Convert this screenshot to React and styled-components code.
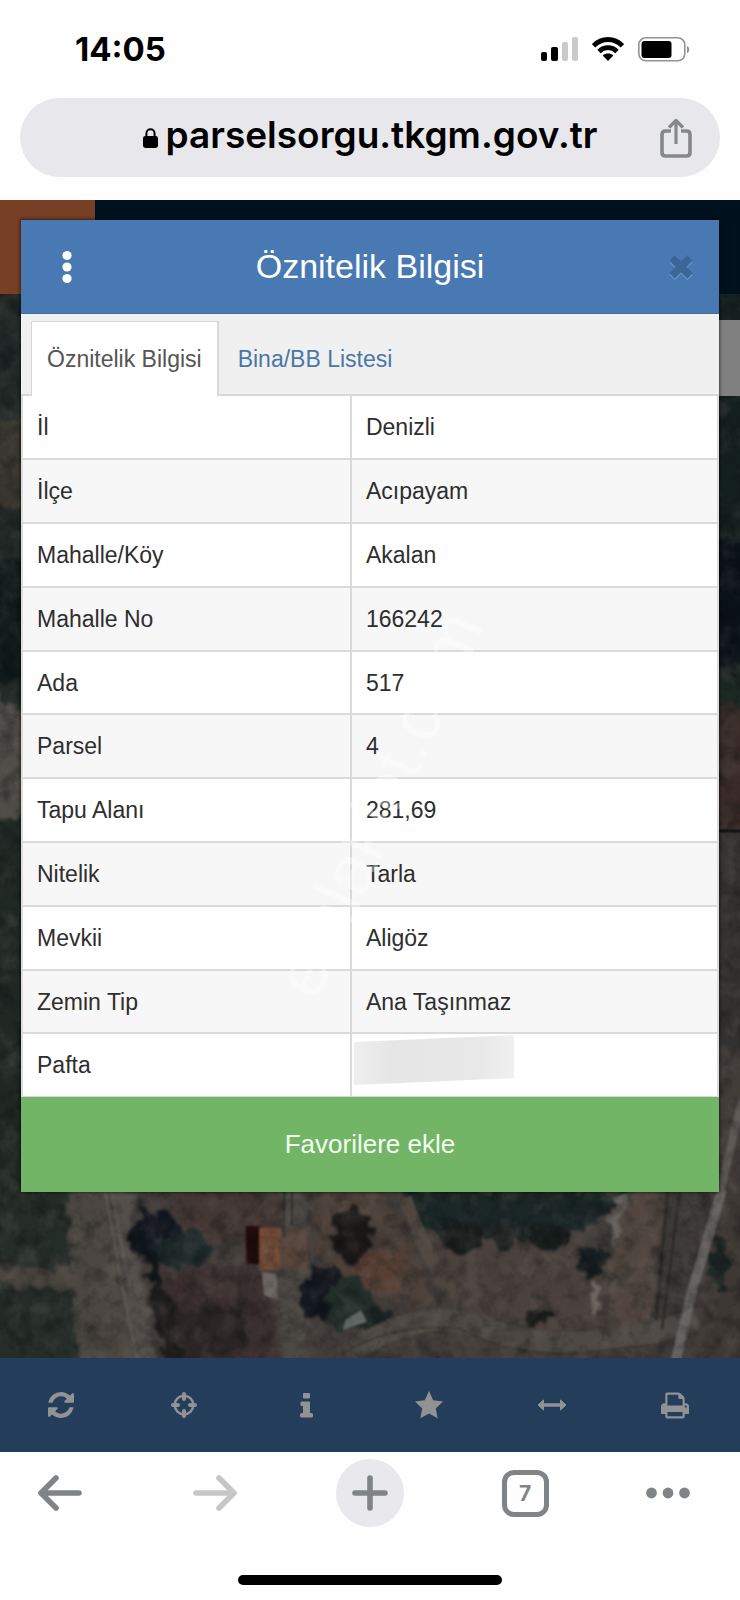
import React from "react";
import styled, { createGlobalStyle, css } from "styled-components";

const GlobalStyle = createGlobalStyle`
  *, *::before, *::after { box-sizing: border-box; }
  body {
    margin: 0;
    background: #fefefe;
    font-family: "Liberation Sans", Arial, sans-serif;
    color: #333;
  }
  svg { display: block; }
`;

const Screen = styled.div`
  display: flex;
  flex-direction: column;
  min-height: 100vh;
`;

/* ---------- phone status and address bar ---------- */

const StatusBar = styled.header`
  display: flex;
  align-items: center;
  justify-content: space-between;
  height: 98px;
  padding: 0 50px 0 75px;
`;

const Clock = styled.time`
  font: 700 33px/40px Inter, sans-serif;
  color: #000;
`;

const StatusIcons = styled.div`
  display: flex;
  align-items: center;
  gap: 14px;
`;

const AddressBar = styled.div`
  display: grid;
  grid-template-columns: 64px 1fr 64px;
  align-items: center;
  height: 79px;
  margin: 0 20px 23px;
  padding: 0 12px;
  border-radius: 40px;
  background: #e8e8ec;
`;

const Address = styled.div`
  grid-column: 2;
  display: flex;
  align-items: flex-end;
  justify-content: center;
  gap: 8px;
  padding-bottom: 6px;
  font: 600 37px/46px Inter, sans-serif;
  color: #000;

  svg { margin-bottom: 10px; }
`;

const PlainButton = styled.button`
  display: flex;
  align-items: center;
  justify-content: center;
  padding: 0;
  border: 0;
  background: none;
  color: inherit;
  font: inherit;
  cursor: pointer;
`;

/* ---------- web page ---------- */

const WebView = styled.main`
  display: grid;
  grid-template-columns: minmax(0, 1fr);
`;

const Site = styled.div`
  grid-area: 1 / 1;
  display: flex;
  flex-direction: column;
`;

const SiteHeader = styled.div`
  display: flex;
  height: 94px;
  background: #00111e;
`;

const MenuBlock = styled.div`
  width: 95px;
  background: #773f24;
`;

const MapArea = styled.div`
  position: relative;
  flex: 1;
  overflow: hidden;
  background: #343230;
`;

const MapImage = styled.svg`
  position: absolute;
  inset: 0;
  width: 100%;
  height: 100%;
`;

const SidePanel = styled.div`
  position: absolute;
  top: 26px;
  right: 0;
  width: 60px;
  height: 76px;
  background: #808080;
`;

const Toolbar = styled.nav`
  display: grid;
  grid-template-columns: repeat(6, 1fr);
  height: 94px;
  padding-right: 4px;
  background: #243d5a;
  color: #919294;
`;

/* ---------- attribute dialog ---------- */

const Dialog = styled.section`
  grid-area: 1 / 1;
  position: relative;
  align-self: start;
  margin: 20px 21px 260px;
  background: #fff;
  box-shadow: 0 0 3px 1px rgba(0, 0, 0, 0.5);
`;

const DialogHeader = styled.header`
  display: grid;
  grid-template-columns: 92px 1fr 76px;
  align-items: stretch;
  height: 94px;
  background: #4879b2;
  border-bottom: 1px solid #416d9f;
  color: #fff;
`;

const DialogTitle = styled.h1`
  margin: 0;
  padding-right: 16px;
  font-size: 34px;
  font-weight: 400;
  line-height: 93px;
  text-align: center;
  white-space: nowrap;
`;

const TabStrip = styled.div`
  display: flex;
  align-items: flex-end;
  height: 82px;
  padding-left: 10px;
  background: #f0f0f0;
  box-shadow: inset 0 -2px #d8d8d8;
`;

const Tab = styled.button`
  height: 75px;
  margin-right: 3px;
  padding: 0 15px;
  border: 1px solid transparent;
  border-bottom: 0;
  background: transparent;
  color: #4a77a5;
  font: 23px/72px "Liberation Sans", Arial, sans-serif;
  white-space: nowrap;
  cursor: pointer;

  ${(p) =>
    p.$active &&
    css`
      background: #fff;
      border-color: #d8d8d8;
      border-right-width: 2px;
      color: #555;
    `}
`;

const AttributeTable = styled.table`
  width: 100%;
  border-collapse: separate;
  border-spacing: 0;
  border: solid #dcdcdc;
  border-width: 0 2px;
  table-layout: fixed;
  font-size: 23px;
`;

const LabelColumn = styled.col`
  width: 47.4%;
`;

const Row = styled.tr`
  height: 64px;
  &:nth-child(even) { background: #f7f7f7; }
  &:nth-child(5n), &:last-child { height: 63px; }
`;

const cell = css`
  padding: 0 14px;
  border-bottom: 2px solid #dadada;
  line-height: 30px;
  text-align: left;
  font-weight: 400;
  color: #2e2e2e;
  ${Row}:last-child & { border-bottom-width: 1px; }
`;

const Label = styled.th`
  ${cell}
  border-right: 2px solid #dadada;
`;

const Value = styled.td`
  ${cell}
`;

const Hidden = styled.div`
  width: 160px;
  height: 50px;
  margin: 0 0 10px -12px;
  background: linear-gradient(90deg, #efefef, #e6e6e6 22%, #e8e8e8 78%, #f0f0f0);
  clip-path: polygon(0 14%, 100% 0, 100% 86%, 0 100%);
`;

const FavoriteButton = styled.button`
  display: block;
  width: 100%;
  height: 95px;
  padding: 0;
  border: 0;
  background: #72b566;
  color: #f4fff0;
  font: 26px/95px "Liberation Sans", Arial, sans-serif;
  cursor: pointer;
`;

const Watermark = styled.svg`
  position: absolute;
  inset: 0;
  width: 100%;
  height: 100%;
  pointer-events: none;
`;

/* ---------- browser navigation ---------- */

const BrowserBar = styled.footer`
  display: flex;
  flex: 1;
  flex-direction: column;
  justify-content: space-between;
  align-items: center;
  padding: 7px 0 15px;
`;

const BrowserButtons = styled.nav`
  display: flex;
  justify-content: space-between;
  width: 100%;
  padding: 0 26px;
  color: #808487;
`;

const NavButton = styled(PlainButton)`
  width: 68px;
  height: 68px;
  border-radius: 50%;
  justify-content: ${(p) => (p.$start ? "flex-start" : "center")};
  background: ${(p) => (p.$filled ? "#e9e9ed" : "transparent")};
  color: ${(p) => (p.$muted ? "#c6c6c6" : "#808487")};
`;

const TabCount = styled.span`
  width: 47px;
  height: 47px;
  border: 5px solid currentColor;
  border-radius: 12px;
  font: 700 21px/38px Inter, sans-serif;
  text-align: center;
`;

const HomeIndicator = styled.div`
  width: 264px;
  height: 10px;
  border-radius: 5px;
  background: #000;
`;

/* ---------- icons ---------- */

const SignalIcon = () => (
  <svg width="37" height="24" viewBox="0 0 37 24" aria-hidden="true">
    <rect x="0" y="15" width="6" height="9" rx="2" />
    <rect x="10" y="10" width="7" height="14" rx="2" />
    <g fill="#cacaca">
      <rect x="21" y="5" width="6" height="19" rx="2" />
      <rect x="31" y="0" width="6" height="24" rx="2" />
    </g>
  </svg>
);

const WifiIcon = () => (
  <svg width="32" height="24" viewBox="0 0 32 24" aria-hidden="true">
    <g fill="none" stroke="#000" strokeWidth="4.8">
      <path d="M1.6 8.8C9.6 .4 22.4 .4 30.4 8.8" />
      <path d="M7 14.4c5.2-5 12.8-5 18 0" />
    </g>
    <path d="M10.7 18.4c3-2.6 7.6-2.6 10.6 0L16 24z" />
  </svg>
);

const BatteryIcon = () => (
  <svg width="52" height="25" viewBox="0 0 52 25" aria-hidden="true">
    <rect x=".8" y=".8" width="46" height="23" rx="7" fill="none" stroke="#929292" strokeWidth="1.6" />
    <rect x="3.5" y="4" width="30" height="17" rx="3" />
    <path d="M49 9c3 1 3 6 0 7z" fill="#929292" />
  </svg>
);

const LockIcon = () => (
  <svg width="15" height="20" viewBox="0 0 15 20" aria-hidden="true">
    <rect y="8" width="15" height="12" rx="2.4" />
    <path d="M3.4 9V5.4a4.1 4.1 0 0 1 8.2 0V9" fill="none" stroke="#000" strokeWidth="2" />
  </svg>
);

const ShareIcon = () => (
  <svg width="32" height="40" viewBox="0 0 32 40" fill="none" stroke="#85888b" strokeWidth="3.6" strokeLinejoin="round" aria-hidden="true">
    <path d="M11 13H5.500q-3.500 0-3.500 3.500v18q0 3.500 3.500 3.500h21q3.500 0 3.500-3.500v-18q0-3.500-3.500-3.500H21" />
    <path d="M16 26V3M9 9.500l7-7 7 7" strokeWidth="3.200" />
  </svg>
);

const MoreIcon = () => (
  <svg width="10" height="34" viewBox="0 0 10 34" fill="#fff" aria-hidden="true">
    <circle cx="5" cy="5.500" r="4.600" />
    <circle cx="5" cy="17" r="4.600" />
    <circle cx="5" cy="28.500" r="4.600" />
  </svg>
);

const CloseIcon = () => (
  <svg width="26" height="26" viewBox="0 0 26 26" fill="none" strokeWidth="7.500" aria-hidden="true">
    <path d="M4 5.500l18 18M22 5.500l-18 18" stroke="#6d9acb" />
    <path d="M4 4l18 18M22 4L4 22" stroke="#3a6698" />
  </svg>
);

const RefreshIcon = () => (
  <svg width="26" height="26" viewBox="0 0 1536 1536" fill="currentColor" aria-hidden="true">
    <path d="M1511 928q0 5-1 7-64 268-268 434.500t-478 166.500q-146 0-282.500-55t-243.500-157l-129 129q-19 19-45 19t-45-19-19-45v-448q0-26 19-45t45-19h448q26 0 45 19t19 45-19 45l-137 137q71 66 161 102t187 36q134 0 250-65t186-179q11-17 53-117 8-23 30-23h192q13 0 22.500 9.500t9.500 22.500zm25-800v448q0 26-19 45t-45 19h-448q-26 0-45-19t-19-45 19-45l138-138q-148-137-349-137-134 0-250 65t-186 179q-11 17-53 117-8 23-30 23h-199q-13 0-22.500-9.500t-9.500-22.500v-7q65-268 270-434.500t480-166.500q146 0 284 55.500t245 156.500l130-129q19-19 45-19t45 19 19 45z" />
  </svg>
);

const CrosshairIcon = () => (
  <svg width="26" height="26" viewBox="0 0 26 26" fill="none" stroke="currentColor" aria-hidden="true">
    <circle cx="13" cy="13" r="9.300" strokeWidth="2.500" />
    <path d="M13 2v5M13 19v5M2 13h5M19 13h5" strokeWidth="4" strokeLinecap="round" />
  </svg>
);

const InfoIcon = () => (
  <svg width="14" height="25" viewBox="0 0 14 25" fill="currentColor" aria-hidden="true">
    <rect x="3" y="0" width="7" height="5.500" rx="1" />
    <path d="M1.500 8.500H9q1 0 1 1V20h1.500q1.500 0 1.500 1.500V23q0 1.500-1.500 1.500h-10Q0 24.500 0 23v-1.500Q0 20 1.500 20H3v-7H1.500Q.5 13 .5 12V9.500q0-1 1-1z" />
  </svg>
);

const StarIcon = () => (
  <svg width="28" height="28" viewBox="0 0 28 28" fill="currentColor" aria-hidden="true">
    <path d="M14 0l4.200 9.300L28 10.500l-7.200 7 1.900 9.700-8.700-4.700-8.700 4.700 1.900-9.700L0 10.500l9.800-1.200z" />
  </svg>
);

const WidthIcon = () => (
  <svg width="30" height="12" viewBox="0 0 30 12" fill="currentColor" stroke="currentColor" strokeLinejoin="round" aria-hidden="true">
    <path d="M1 6l5.500-5v10zM29 6l-5.500-5v10z" />
    <path d="M6 6h18" strokeWidth="3.500" />
  </svg>
);

const PrintIcon = () => (
  <svg width="28" height="27" viewBox="0 128 1664 1536" fill="currentColor" aria-hidden="true">
    <path d="M384 1536h896v-256h-896v256zm0-640h896v-384h-160q-40 0-68-28t-28-68v-160h-640v640zm1152 64q0-26-19-45t-45-19-45 19-19 45 19 45 45 19 45-19 19-45zm128 0v416q0 13-9.500 22.500t-22.500 9.500h-224v160q0 40-28 68t-68 28h-960q-40 0-68-28t-28-68v-160h-224q-13 0-22.500-9.500t-9.500-22.500v-416q0-79 56.500-135.500t135.500-56.500h64v-544q0-40 28-68t68-28h672q40 0 88 20t76 48l152 152q28 28 48 76t20 88v256h64q79 0 135.500 56.500t56.500 135.500z" />
  </svg>
);

const ArrowIcon = ({ forward }) => (
  <svg width="44" height="36" viewBox="0 0 44 36" fill="none" stroke="currentColor" strokeWidth="5.600" strokeLinecap="round" strokeLinejoin="round" aria-hidden="true">
    {forward ? <path d="M3 18h37M26 3l15 15-15 15" /> : <path d="M41 18H4M18 3L3 18l15 15" />}
  </svg>
);

const PlusIcon = () => (
  <svg width="36" height="36" viewBox="0 0 36 36" stroke="currentColor" strokeWidth="5.600" strokeLinecap="round" aria-hidden="true">
    <path d="M18 3v30M3 18h30" />
  </svg>
);

const DotsIcon = () => (
  <svg width="44" height="12" viewBox="0 0 44 12" fill="currentColor" aria-hidden="true">
    <circle cx="5.500" cy="6" r="5.400" />
    <circle cx="22" cy="6" r="5.400" />
    <circle cx="38.500" cy="6" r="5.400" />
  </svg>
);

/* Aerial photo: fields, tracks, roofs and trees under a dark veil. */
const AerialMap = () => (
  <MapImage viewBox="0 294 740 1064" preserveAspectRatio="xMidYMax slice" aria-hidden="true">
    <defs>
      <filter id="terrain" x="-5%" y="-5%" width="110%" height="110%" colorInterpolationFilters="sRGB">
        <feTurbulence type="fractalNoise" baseFrequency="0.07" numOctaves="4" seed="4" result="n" />
        <feDisplacementMap in="SourceGraphic" in2="n" scale="22" xChannelSelector="R" yChannelSelector="G" />
        <feGaussianBlur stdDeviation="1.500" />
      </filter>
      <filter id="soft" colorInterpolationFilters="sRGB"><feGaussianBlur stdDeviation="1" /></filter>
      <filter id="light" x="0" y="0" width="100%" height="100%" colorInterpolationFilters="sRGB">
        <feTurbulence type="fractalNoise" baseFrequency="0.05 0.04" numOctaves="5" seed="8" />
        <feColorMatrix values="0 0 0 0 .5  0 0 0 0 .47  0 0 0 0 .44  2 0 0 0 -.9" />
      </filter>
      <filter id="shade" x="0" y="0" width="100%" height="100%" colorInterpolationFilters="sRGB">
        <feTurbulence type="fractalNoise" baseFrequency="0.06" numOctaves="5" seed="21" />
        <feColorMatrix values="0 0 0 0 0  0 0 0 0 .02  0 0 0 0 .03  2.400 0 0 0 -1.050" />
      </filter>
    </defs>
    <rect y="294" width="740" height="1064" fill="#433d3a" />
    <g filter="url(#terrain)">
      <rect x="-20" y="280" width="60" height="430" fill="#222927" />
      <rect x="-20" y="420" width="60" height="90" fill="#393630" />
      <rect x="-20" y="560" width="60" height="120" fill="#121c1b" />
      <path d="M-10 690l50 50v100l-50-30z" fill="#504d49" />
      <rect x="-20" y="820" width="60" height="380" fill="#202824" />
      <rect x="700" y="290" width="60" height="250" fill="#14201f" />
      <rect x="700" y="540" width="60" height="130" fill="#0a1218" />
      <rect x="700" y="670" width="60" height="40" fill="#1d2a24" />
      <rect x="700" y="705" width="60" height="124" fill="#392b28" />
      <rect x="700" y="832" width="60" height="220" fill="#343230" />
      <path d="M-20 1170h85l13 102-98-14zM-20 1285l105 8-8 75H-20z" fill="#252d28" />
      <path d="M65 1180h64l24 190H78z" fill="#4b4641" />
      <path d="M-10 1266l110 8v20l-110-14z" fill="#4c4640" />
      <path d="M108 1180h20l28 190h-20z" fill="#544f4b" />
      <path d="M155 1180h130v60h-90z" fill="#433734" />
      <path d="M165 1275l90-12 20 45 3 60H172z" fill="#3a2e2e" />
      <path d="M175 1315l60-12 15 40-65 20z" fill="#2b2625" />
      <path d="M155 1270l18 30 10 70h-14l-18-60z" fill="#1e1c1b" />
      <path d="M136 1192l8 26 4 60 16 20-6-60z" fill="#14171a" />
      <ellipse cx="157" cy="1236" rx="28" ry="23" fill="#12161e" />
      <ellipse cx="184" cy="1250" rx="28" ry="19" fill="#1f292a" />
      <path d="M280 1180h28v190h-25z" fill="#4c4844" />
      <path d="M318 1190h60l35 50 20 70-70-20-52-40z" fill="#4c4039" />
      <path d="M352 1249l48 6 4 36-50-3z" fill="#573e33" />
      <ellipse cx="352" cy="1234" rx="20" ry="26" fill="#1a1817" />
      <path d="M402 1190h230l-35 35-60 18-95-7-32-16z" fill="#1b2727" />
      <path d="M440 1240l140-5 28 52-10 40-65 5-72-20-28-35z" fill="#4a413d" />
      <path d="M630 1185h50l-22 145-50 8 2-70z" fill="#50463f" />
      <path d="M664 1185h46l-30 180-28-30z" fill="#3d3936" />
      <path d="M717 1190h40v180h-57z" fill="#3e3834" />
      <ellipse cx="324" cy="1294" rx="24" ry="29" fill="#13171e" />
      <ellipse cx="350" cy="1304" rx="24" ry="26" fill="#232f2b" />
      <ellipse cx="374" cy="1318" rx="14" ry="18" fill="#182121" />
      <ellipse cx="462" cy="1236" rx="20" ry="17" fill="#171c1b" />
      <ellipse cx="503" cy="1236" rx="14" ry="11" fill="#1a1f1e" />
      <ellipse cx="548" cy="1236" rx="22" ry="11" fill="#181d1c" />
      <ellipse cx="593" cy="1260" rx="17" ry="16" fill="#141b1d" />
      <ellipse cx="538" cy="1318" rx="14" ry="8" fill="#1a1c1a" />
      <ellipse cx="719" cy="1264" rx="8" ry="24" fill="#1a2322" />
      <path d="M614 1194l14 4-7 35-12 12 2-26z" fill="#68635e" />
      <path d="M592 1279l8 8-6 32-6-6z" fill="#6d6761" />
    </g>
    <g filter="url(#soft)">
      <path d="M355 1350q60-42 122-25 55 26 130 15 60-8 90-22" fill="none" stroke="#4e4944" strokeWidth="22" />
      <path d="M340 1355q55-34 120-26 55 28 120 24l70-8" fill="none" stroke="#37322e" strokeWidth="1.500" />
      <path d="M405 1198q20 60 52 98" fill="none" stroke="#4e463f" strokeWidth="14" />
      <path d="M722 1190l-31 105-15 65" fill="none" stroke="#666361" strokeWidth="10" />
      <path d="M742 1100l-22 92" fill="none" stroke="#5d5956" strokeWidth="8" />
      <path d="M105 1190l18 100 14 68M112 1190l19 105" fill="none" stroke="#605b57" strokeWidth="2" />
      <path d="M668 1190l-12 130M680 1190l-18 140" fill="none" stroke="#282624" strokeWidth="2" />
      <path d="M246 1226h14v38h-14z" fill="#200c0a" />
      <path d="M259 1228h48v42h-48z" fill="#58463d" />
      <path d="M259 1228h21v42h-21z" fill="#744c37" />
      <path d="M262 1272l15 2 1 26-14-5z" fill="#6b6663" />
      <path d="M345 1320l16-10 6 12-24 8z" fill="#5d6763" />
      <path d="M284 1190v48M292 1190v36" stroke="#262423" strokeWidth="1.500" />
      <path d="M716 831h30" stroke="#020202" strokeWidth="2" />
    </g>
    <rect y="294" width="740" height="1064" filter="url(#light)" opacity=".25" />
    <rect y="294" width="740" height="1064" filter="url(#shade)" opacity=".3" />
  </MapImage>
);

/* ---------- data ---------- */

const attributes = [
  ["İl", "Denizli"],
  ["İlçe", "Acıpayam"],
  ["Mahalle/Köy", "Akalan"],
  ["Mahalle No", "166242"],
  ["Ada", "517"],
  ["Parsel", "4"],
  ["Tapu Alanı", "281,69"],
  ["Nitelik", "Tarla"],
  ["Mevkii", "Aligöz"],
  ["Zemin Tip", "Ana Taşınmaz"],
  ["Pafta", null],
];

const tools = [
  ["Yenile", RefreshIcon],
  ["Konum", CrosshairIcon],
  ["Bilgi", InfoIcon],
  ["Favoriler", StarIcon],
  ["Ölçüm", WidthIcon],
  ["Yazdır", PrintIcon],
];

export default function App() {
  return (
    <Screen>
      <GlobalStyle />
      <StatusBar>
        <Clock>14:05</Clock>
        <StatusIcons>
          <SignalIcon />
          <WifiIcon />
          <BatteryIcon />
        </StatusIcons>
      </StatusBar>
      <AddressBar>
        <Address>
          <LockIcon />
          <span>parselsorgu.tkgm.gov.tr</span>
        </Address>
        <PlainButton aria-label="Paylaş">
          <ShareIcon />
        </PlainButton>
      </AddressBar>

      <WebView>
        <Site>
          <SiteHeader>
            <MenuBlock />
          </SiteHeader>
          <MapArea>
            <AerialMap />
            <SidePanel />
          </MapArea>
          <Toolbar>
            {tools.map(([name, Icon]) => (
              <PlainButton key={name} aria-label={name}>
                <Icon />
              </PlainButton>
            ))}
          </Toolbar>
        </Site>

        <Dialog aria-labelledby="dialog-title">
          <DialogHeader>
            <PlainButton aria-label="Menü">
              <MoreIcon />
            </PlainButton>
            <DialogTitle id="dialog-title">Öznitelik Bilgisi</DialogTitle>
            <PlainButton aria-label="Kapat">
              <CloseIcon />
            </PlainButton>
          </DialogHeader>
          <TabStrip role="tablist">
            <Tab role="tab" aria-selected="true" $active>Öznitelik Bilgisi</Tab>
            <Tab role="tab" aria-selected="false">Bina/BB Listesi</Tab>
          </TabStrip>
          <AttributeTable>
            <colgroup>
              <LabelColumn />
              <col />
            </colgroup>
            <tbody>
              {attributes.map(([label, value]) => (
                <Row key={label}>
                  <Label scope="row">{label}</Label>
                  <Value>{value ?? <Hidden />}</Value>
                </Row>
              ))}
            </tbody>
          </AttributeTable>
          <FavoriteButton>Favorilere ekle</FavoriteButton>
          <Watermark viewBox="0 0 698 972" aria-hidden="true">
            <text transform="translate(296 782) rotate(-66)" fontSize="70" fill="#fff" fillOpacity=".35">
              emlakjet.com
            </text>
          </Watermark>
        </Dialog>
      </WebView>

      <BrowserBar>
        <BrowserButtons>
          <NavButton aria-label="Geri"><ArrowIcon /></NavButton>
          <NavButton aria-label="İleri" $muted><ArrowIcon forward /></NavButton>
          <NavButton aria-label="Yeni sekme" $filled><PlusIcon /></NavButton>
          <NavButton aria-label="Sekmeler"><TabCount>7</TabCount></NavButton>
          <NavButton aria-label="Diğer" $start><DotsIcon /></NavButton>
        </BrowserButtons>
        <HomeIndicator />
      </BrowserBar>
    </Screen>
  );
}
